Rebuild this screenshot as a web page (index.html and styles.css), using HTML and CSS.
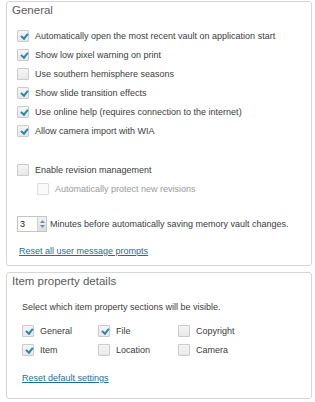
FILE: index.html
```html
<!DOCTYPE html>
<html>
<head>
<meta charset="utf-8">
<link rel="stylesheet" href="styles.css">
</head>
<body>
<section class="panel general">
  <h2 class="title">General</h2>
  <div class="opts">
    <label class="row"><span class="cb on"></span>Automatically open the most recent vault on application start</label>
    <label class="row"><span class="cb on"></span>Show low pixel warning on print</label>
    <label class="row"><span class="cb"></span>Use southern hemisphere seasons</label>
    <label class="row"><span class="cb on"></span>Show slide transition effects</label>
    <label class="row"><span class="cb on"></span>Use online help (requires connection to the internet)</label>
    <label class="row"><span class="cb on"></span>Allow camera import with WIA</label>
  </div>
  <div class="opts rev">
    <label class="row"><span class="cb"></span>Enable revision management</label>
    <label class="row sub disabled"><span class="cb"></span>Automatically protect new revisions</label>
  </div>
  <div class="spin-row">
    <span class="spin"><span class="val">3</span><span class="arrows"><svg width="7" height="12" viewBox="0 0 7 12"><path d="M1 5 L3.5 2 L6 5 Z" fill="#6f8fb0"/><path d="M1 7 L3.5 10 L6 7 Z" fill="#6f8fb0"/></svg></span></span>
    <span>Minutes before automatically saving memory vault changes.</span>
  </div>
  <a class="link" href="#">Reset all user message prompts</a>
</section>
<section class="panel items">
  <h2 class="title">Item property details</h2>
  <p class="desc">Select which item property sections will be visible.</p>
  <div class="grid">
    <label class="row"><span class="cb on"></span>General</label>
    <label class="row"><span class="cb on"></span>File</label>
    <label class="row"><span class="cb"></span>Copyright</label>
    <label class="row"><span class="cb on"></span>Item</label>
    <label class="row"><span class="cb"></span>Location</label>
    <label class="row"><span class="cb"></span>Camera</label>
  </div>
  <a class="link" href="#">Reset default settings</a>
</section>
</body>
</html>
```

FILE: styles.css
```css
* { box-sizing: border-box; }
body {
  margin: 0;
  padding: 1px 4px 0 6px;
  background: #fff;
  font-family: "Liberation Sans", Arial, sans-serif;
  font-size: 9px;
  color: #3c3c3c;
  width: 315px;
}
.panel {
  border: 1px solid #d6d6d6;
  border-radius: 3px;
  width: 306px;
}
.general { height: 265px; padding: 0 0 0 10px; }
.items { margin-top: 6px; height: 127px; padding: 0 0 0 15px; }
.title {
  margin: 0;
  font-weight: normal;
  font-size: 11.5px;
  color: #5a5a5a;
  height: 19px;
  line-height: 17px;
  margin-left: -5px;
}
.items .title { margin-left: -10px; }
.opts { display: flex; flex-direction: column; gap: 6px; margin-top: 8px; }
.rev { margin-top: 26px; }
.row { display: flex; align-items: center; height: 13px; }
.cb {
  width: 12px; height: 12px;
  border: 1px solid #cbcbcb;
  border-radius: 1px;
  background: linear-gradient(#f5f5f5, #e8e8e8);
  margin-right: 6px;
  flex: none;
  position: relative;
}
.cb.on::after {
  content: "";
  position: absolute;
  left: 3.5px; top: 1.5px;
  width: 2.5px; height: 5px;
  border: solid #2a86b0;
  border-width: 0 2px 2px 0;
  transform: rotate(40deg);
}
.sub { margin-left: 20px; }
.disabled { color: #9a9a9a; }
.disabled .cb { background: #fafafa; border-color: #dcdcdc; }
.spin-row { display: flex; align-items: center; margin-top: 21px; height: 16px; }
.spin {
  display: flex; width: 30px; height: 16px;
  border: 1px solid #c4c4c4;
  margin-right: 3px;
}
.spin .val { flex: 1; padding-left: 2px; line-height: 14px; color: #222; }
.spin .arrows {
  width: 9px; border-left: 1px solid #d0d0d0;
  background: linear-gradient(#f2f2f2, #dedede);
  display: flex; align-items: center; justify-content: center;
}
.link {
  display: inline-block;
  margin-top: 14px;
  margin-left: 2px;
  color: #1d6f93;
  text-decoration: underline;
}
.desc { margin: 10px 0 0; }
.grid {
  display: grid;
  grid-template-columns: 76px 80px 80px;
  row-gap: 6px;
  margin-top: 12px;
}
.items .link { margin-left: 0; margin-top: 17px; }
```
